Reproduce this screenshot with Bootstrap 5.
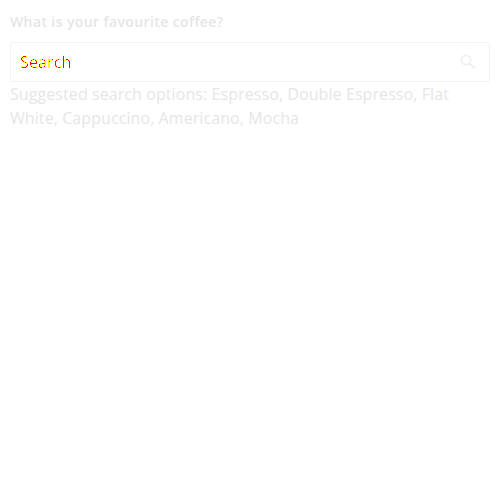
<!DOCTYPE html>
<html lang="en">
<head>
<meta charset="utf-8">
<meta name="viewport" content="width=device-width, initial-scale=1">
<title>Search</title>
<link href="https://cdn.jsdelivr.net/npm/bootstrap@5.3.0/dist/css/bootstrap.min.css" rel="stylesheet">
<style>
body{font-family:"Open Sans",sans-serif;font-size:16px;line-height:24px;color:#e6e6e6;background:#fff;padding:10px}
.field-label{font-size:14px;line-height:24px;font-weight:600;letter-spacing:.39px;margin-bottom:8px}
.search-box{height:40px;border:1px solid #f3f3f3;border-radius:2px;padding:0 13px 0 9px}
.search-text{color:#000;letter-spacing:.15px;filter:url(#marked)}
.search-icon{color:#f0f0f0}
.hint{letter-spacing:.08px}
</style>
</head>
<body>
<svg width="0" height="0" class="position-absolute" aria-hidden="true">
<filter id="marked" color-interpolation-filters="sRGB">
<feColorMatrix values="0 0 0 0 1  0 0 0 -1 1  0 0 0 0 0  0 0 0 1 0"/>
<feComponentTransfer><feFuncG type="discrete" tableValues="0 1 1 1 1 1"/><feFuncA type="discrete" tableValues="0 0 0 1 1 1 1 1"/></feComponentTransfer>
</filter>
</svg>
<main>
<div class="field-label">What is your favourite coffee?</div>
<div class="search-box d-flex align-items-center justify-content-between">
<span class="search-text">Search</span>
<svg class="search-icon" width="16" height="16" viewBox="0 0 16 16" fill="none" stroke="currentColor" stroke-width="1.9" aria-hidden="true"><circle cx="6" cy="6" r="4.6"/><path d="M9.5 9.5 14.6 14.6"/></svg>
</div>
<div class="hint">Suggested search options: Espresso, Double Espresso, Flat White, Cappuccino, Americano, Mocha</div>
</main>
<script src="https://cdn.jsdelivr.net/npm/bootstrap@5.3.0/dist/js/bootstrap.bundle.min.js"></script>
</body>
</html>
